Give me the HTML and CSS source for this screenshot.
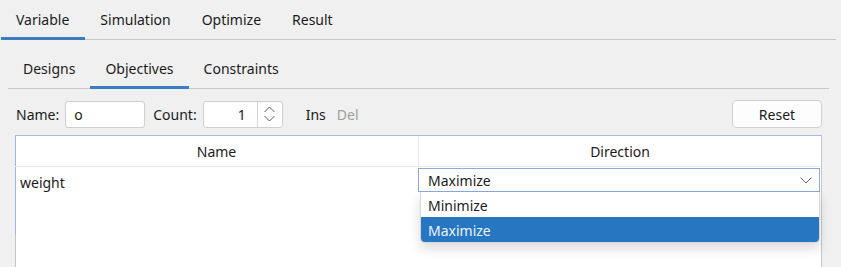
FILE: index.html
```html
<!DOCTYPE html>
<html lang="en">
<head>
    <meta charset="UTF-8">
    <title>Objectives</title>
    <link rel="stylesheet" href="styles.css">
</head>
<body>
    <div class="tabs">
        <div class="tab active">Variable</div>
        <div class="tab">Simulation</div>
        <div class="tab">Optimize</div>
        <div class="tab">Result</div>
    </div>

    <div class="subtabs">
        <div class="subtab">Designs</div>
        <div class="subtab active">Objectives</div>
        <div class="subtab">Constraints</div>
    </div>

    <div class="toolbar">
        <label>Name:</label>
        <div class="field name-field">o</div>
        <label>Count:</label>
        <div class="spin">
            <div class="spin-value">1</div>
            <div class="spin-btn">
                <svg width="13" height="16" viewBox="0 0 13 16">
                    <path d="M1.5 6 L6.5 1 L11.5 6" fill="none" stroke="#5a5a5a" stroke-width="1"/>
                    <path d="M1.5 10 L6.5 15 L11.5 10" fill="none" stroke="#5a5a5a" stroke-width="1"/>
                </svg>
            </div>
        </div>
        <span class="link">Ins</span>
        <span class="link disabled">Del</span>
        <div class="spacer"></div>
        <button class="reset">Reset</button>
    </div>

    <div class="table">
        <div class="thead">
            <div class="th">Name</div>
            <div class="th">Direction</div>
        </div>
        <div class="row">
            <div class="cell">weight</div>
            <div class="cell combo-cell">
                <div class="combo">
                    <span>Maximize</span>
                    <svg width="12" height="7" viewBox="0 0 12 7">
                        <path d="M0.5 0.5 L6 6 L11.5 0.5" fill="none" stroke="#606060" stroke-width="1"/>
                    </svg>
                </div>
                <div class="popup">
                    <div class="option">Minimize</div>
                    <div class="option selected">Maximize</div>
                </div>
            </div>
        </div>
    </div>
</body>
</html>
```

FILE: styles.css
```css
body {
    margin: 0;
    background: #f0f0f0;
    font-family: "Noto Sans", "Open Sans", sans-serif;
    font-size: 14px;
    color: #1b1b1b;
    overflow: hidden;
    height: 267px;
}

.tabs {
    display: flex;
    margin: 0 5px 0 1px;
    border-bottom: 1px solid #c8c8c8;
}
.tab {
    padding: 10px 16px 7px 15px;
    line-height: 20px;
    border-bottom: 3px solid transparent;
    margin-bottom: -1px;
}
.tab.active { border-bottom-color: #3b7dc5; }

.subtabs {
    display: flex;
    margin: 0 12px 0 8px;
    border-bottom: 1px solid #c8c8c8;
}
.subtab {
    padding: 19px 15px 7px;
    line-height: 20px;
    border-bottom: 3px solid transparent;
    margin-bottom: -1px;
}
.subtab.active { border-bottom-color: #3b7dc5; }

.toolbar {
    display: flex;
    align-items: center;
    height: 28px;
    margin: 11px 19px 0 16px;
}
.toolbar label { margin-right: 6px; }
.field {
    width: 80px;
    height: 27px;
    box-sizing: border-box;
    background: #fff;
    border: 1px solid #cfcfcf;
    border-radius: 3px;
    padding-left: 8px;
    line-height: 25px;
    margin-right: 8px;
}
.spin {
    display: flex;
    width: 80px;
    height: 27px;
    box-sizing: border-box;
    background: #fff;
    border: 1px solid #cfcfcf;
    border-radius: 3px;
    margin-right: 23px;
}
.spin-value {
    width: 54px;
    text-align: right;
    padding-right: 11px;
    box-sizing: border-box;
    line-height: 25px;
    border-right: 1px solid #d6d6d6;
}
.spin-btn {
    flex: 1;
    display: flex;
    align-items: center;
    justify-content: center;
}
.link { margin-right: 11px; }
.link.disabled { color: #a0a0a0; }
.spacer { flex: 1; }
.reset {
    width: 90px;
    height: 28px;
    background: #fdfdfd;
    border: 1px solid #d0d0d0;
    border-radius: 4px;
    font: inherit;
    color: inherit;
    padding: 0;
}

.table {
    position: relative;
    margin: 7px 19px 0 15px;
    height: 131px;
    background:
        linear-gradient(#9bb6e0, #9bb6e0) left top / 1px 99px no-repeat,
        linear-gradient(#c4c4c4, #c4c4c4) left top / 1px 100% no-repeat,
        #fff;
    border-top: 1px solid #a4bde2;
    border-right: 1px solid #c9c9c9;
}
.thead {
    display: grid;
    grid-template-columns: 403px 1fr;
    height: 30px;
    border-bottom: 1px solid #e8e8e8;
}
.th {
    text-align: center;
    line-height: 31px;
}
.th + .th { border-left: 1px solid #e8e8e8; }
.row {
    display: grid;
    grid-template-columns: 403px 1fr;
    height: 26px;
}
.cell {
    padding-left: 5px;
    line-height: 31px;
}
.combo-cell {
    position: relative;
    padding: 1px 0 0 0;
    line-height: normal;
}
.combo {
    display: flex;
    align-items: center;
    justify-content: space-between;
    height: 24px;
    box-sizing: border-box;
    border: 1px solid #88abdc;
    padding: 1px 7px 0 9px;
    margin-right: 1px;
}
.popup {
    position: absolute;
    top: 25px;
    left: 2px;
    right: 1px;
    background: #fff;
    border: 1px solid #d8d8d8;
    border-top: none;
    border-radius: 0 0 5px 5px;
    overflow: hidden;
    box-shadow: 0 6px 12px rgba(0, 0, 0, 0.14);
}
.option {
    height: 25px;
    box-sizing: border-box;
    padding: 3px 0 0 7px;
    line-height: 22px;
}
.option.selected {
    background: #2776c1;
    color: #eef4ff;
}
```
